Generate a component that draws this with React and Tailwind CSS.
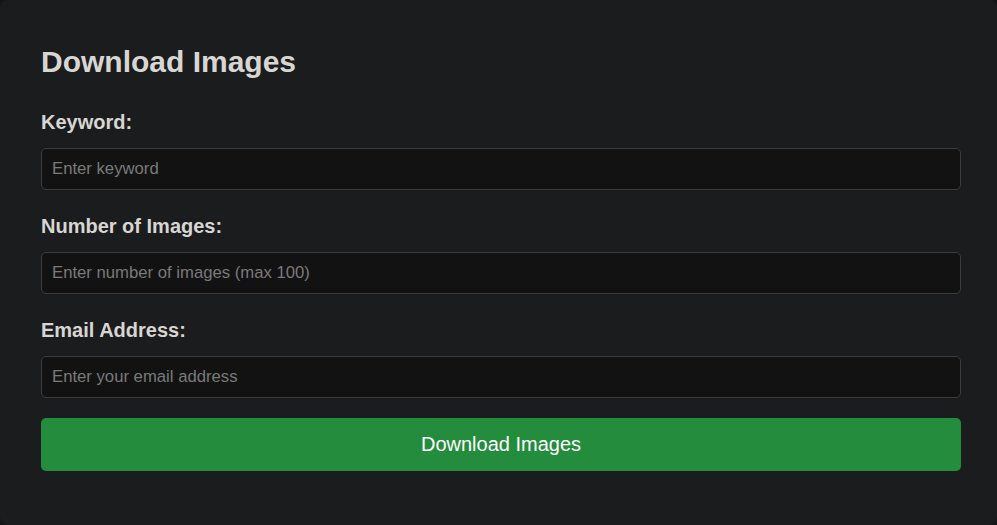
import React from 'react';

const fields = [
    { id: 'keyword', label: 'Keyword:', placeholder: 'Enter keyword', type: 'text' },
    { id: 'count', label: 'Number of Images:', placeholder: 'Enter number of images (max 100)', type: 'number' },
    { id: 'email', label: 'Email Address:', placeholder: 'Enter your email address', type: 'email' },
];

const App = () => {
    return (
        <div className="min-h-[525px] bg-[#141516] font-['Liberation_Sans',Arial,sans-serif]">
            <div className="min-h-[525px] rounded-lg bg-[#1b1c1e] pl-[41px] pr-[36px] pt-[44px] pb-[54px]">
                <h1 className="text-[30px] leading-[36px] font-bold text-[#d8d6d2]">Download Images</h1>

                <form className="mt-[30px] flex flex-col" onSubmit={(e) => e.preventDefault()}>
                    {fields.map((f, i) => (
                        <div key={f.id} className={i > 0 ? 'mt-[24px]' : ''}>
                            <label htmlFor={f.id} className="block text-[20px] leading-[24px] font-bold text-[#d8d6d2]">
                                {f.label}
                            </label>
                            <input
                                id={f.id}
                                type={f.type}
                                placeholder={f.placeholder}
                                className="mt-[14px] block h-[42px] w-full rounded-[5px] border border-[#3b3c3e] bg-[#121212] px-[10px] pb-[1px] text-[16.7px] text-[#d8d6d2] placeholder:text-[#7a7a7a] outline-none appearance-none"
                            />
                        </div>
                    ))}

                    <button
                        type="submit"
                        className="mt-[20px] h-[53px] w-full rounded-[5px] bg-[#238c3d] pb-[2px] text-[20px] text-white"
                    >
                        Download Images
                    </button>
                </form>
            </div>
        </div>
    );
};

export default App;
